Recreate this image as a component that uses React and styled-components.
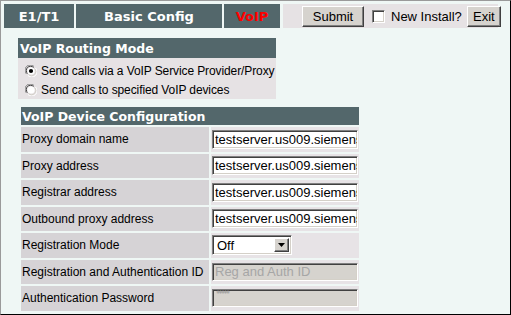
import React from "react";
import styled, { createGlobalStyle } from "styled-components";

const Global = createGlobalStyle`
  html, body { margin: 0; padding: 0; background: #eff7f5; }
  body { font-family: "Liberation Sans", Arial, sans-serif; }
  * { box-sizing: border-box; }
  input::placeholder { color: #a6a6a6; opacity: 1; }
`;

const Frame = styled.div`
  width: 511px;
  height: 315px;
  background: #eff7f5;
  border-top: 1px solid #9a9a9a;
  border-left: 1px solid #9a9a9a;
  border-right: 1px solid #000;
  border-bottom: 1px solid #000;
  padding: 3px 0 0 3px;
  overflow: hidden;
`;

const TopBar = styled.div`
  display: flex;
  height: 24px;
  gap: 2px;
`;

const Tab = styled.div`
  width: ${(p) => p.$w}px;
  flex-shrink: 0;
  background: #53676b;
  color: ${(p) => (p.$active ? "#ff0000" : "#ffffff")};
  font-family: "DejaVu Sans", Verdana, sans-serif;
  font-weight: bold;
  font-size: 13px;
  display: flex;
  align-items: center;
  justify-content: center;
`;

const Toolbar = styled.div`
  margin-left: 1px;
  width: 215px;
  flex-shrink: 0;
  background: #e6e2e4;
  display: flex;
  align-items: center;
  padding-left: 19px;
  white-space: nowrap;
`;

const Button = styled.button`
  flex-shrink: 0;
  height: 21px;
  width: ${(p) => p.$w}px;
  padding: 0;
  background: #d6d3ce;
  font-family: "Liberation Sans", Arial, sans-serif;
  font-size: 13px;
  color: #000;
  border-top: 1px solid #ffffff;
  border-left: 1px solid #ffffff;
  border-right: 1px solid #404040;
  border-bottom: 1px solid #404040;
  box-shadow: inset -1px -1px #808080;
  border-radius: 0;
`;

const CheckBox = styled.span`
  flex-shrink: 0;
  display: inline-block;
  width: 13px;
  height: 13px;
  margin-left: 8px;
  background: #fff;
  border-top: 1px solid #808080;
  border-left: 1px solid #808080;
  border-right: 1px solid #fff;
  border-bottom: 1px solid #fff;
  box-shadow: inset 1px 1px #404040, inset -1px -1px #d4d0c8;
`;

const CheckLabel = styled.span`
  flex-shrink: 0;
  font-size: 13px;
  color: #000;
  margin-left: 6px;
  margin-right: 5px;
`;

const Body = styled.div`
  padding-left: 14px;
  margin-top: 10px;
`;

const Section = styled.div`
  width: ${(p) => p.$w}px;
  margin-left: ${(p) => p.$ml || 0}px;
  margin-top: ${(p) => p.$mt || 0}px;
`;

const Header = styled.div`
  height: ${(p) => p.$h}px;
  background: #53676b;
  color: #fff;
  font-family: "DejaVu Sans", Verdana, sans-serif;
  font-weight: bold;
  font-size: 12.5px;
  display: flex;
  align-items: center;
  padding-left: ${(p) => p.$pl}px;
  white-space: nowrap;
`;

const RadioArea = styled.div`
  background: #e6e2e4;
  padding-top: 3px;
`;

const RadioRow = styled.div`
  height: 19px;
  display: flex;
  align-items: center;
  padding-left: 7px;
  font-size: 12px;
  color: #000;
  white-space: nowrap;
`;

const RadioText = styled.span`
  margin-left: 4px;
  letter-spacing: -0.1px;
`;

const Radio = ({ checked }) => (
  <svg width="12" height="12" viewBox="0 0 12 12" style={{ flexShrink: 0 }}>
    <path d="M1.5 9 A5 5 0 0 1 9 1.5" fill="none" stroke="#808080" strokeWidth="1" />
    <path d="M2.5 8.5 A4 4 0 0 1 8.5 2.5" fill="none" stroke="#404040" strokeWidth="1" />
    <circle cx="6" cy="6" r="3.6" fill="#fff" />
    <path d="M10.5 3 A5 5 0 0 1 3 10.5" fill="none" stroke="#fff" strokeWidth="1" />
    <path d="M9.5 3.5 A4 4 0 0 1 3.5 9.5" fill="none" stroke="#d4d0c8" strokeWidth="1" />
    {checked && <circle cx="6" cy="6" r="2.1" fill="#000" />}
  </svg>
);

const Grid = styled.div`
  display: grid;
  grid-template-columns: 188px 148px;
  grid-auto-rows: 24.5px;
  column-gap: 2px;
  row-gap: 2px;
  margin-top: 2px;
`;

const Label = styled.div`
  background: #d6d3d6;
  font-size: 12px;
  color: #000;
  display: flex;
  align-items: center;
  padding-left: 1px;
  white-space: nowrap;
`;

const Value = styled.div`
  background: #e7e3e6;
  display: flex;
  align-items: center;
  padding-left: 1px;
`;

const inset = `
  border-top: 1px solid #808080;
  border-left: 1px solid #808080;
  border-right: 1px solid #ffffff;
  border-bottom: 1px solid #ffffff;
  box-shadow: inset 1px 1px #404040, inset -1px -1px #d4d0c8;
`;

const TextInput = styled.input`
  width: 146px;
  height: ${(p) => (p.$tall ? 19 : 18)}px;
  ${inset}
  background: ${(p) => (p.disabled ? "#d6d3ce" : "#ffffff")};
  color: #000;
  font-family: "Liberation Sans", Arial, sans-serif;
  font-size: 13px;
  padding: 0 0 0 2px;
  margin: 0;
  outline: none;
  border-radius: 0;
`;

const PasswordBox = styled.div`
  width: 146px;
  height: 18px;
  ${inset}
  background: #d6d3ce;
  color: #9a9a9a;
  font-family: "DejaVu Sans", sans-serif;
  font-size: 8px;
  line-height: 10px;
  padding-left: 3px;
  letter-spacing: -1.5px;
`;

const SelectBox = styled.div`
  width: 80px;
  height: 20px;
  ${inset}
  background: #fff;
  display: flex;
  align-items: stretch;
  padding: 2px;
`;

const SelectValue = styled.span`
  flex: 1;
  font-size: 13px;
  display: flex;
  align-items: center;
  padding-left: 2px;
`;

const ArrowButton = styled.span`
  width: 15px;
  background: #d6d3ce;
  border-top: 1px solid #ffffff;
  border-left: 1px solid #ffffff;
  border-right: 1px solid #404040;
  border-bottom: 1px solid #404040;
  box-shadow: inset -1px -1px #808080;
  display: flex;
  align-items: center;
  justify-content: center;
`;

const rows = [
  { label: "Proxy domain name", kind: "text", value: "testserver.us009.siemens.net" },
  { label: "Proxy address", kind: "text", value: "testserver.us009.siemens.net" },
  { label: "Registrar address", kind: "text", value: "testserver.us009.siemens.net" },
  { label: "Outbound proxy address", kind: "text", value: "testserver.us009.siemens.net" },
  { label: "Registration Mode", kind: "select", value: "Off" },
  { label: "Registration and Authentication ID", kind: "disabled", value: "Reg and Auth ID" },
  { label: "Authentication Password", kind: "password", value: "*****" },
];

function Field({ row }) {
  if (row.kind === "select") {
    return (
      <SelectBox>
        <SelectValue>{row.value}</SelectValue>
        <ArrowButton>
          <svg width="7" height="4" viewBox="0 0 7 4">
            <path d="M0 0 H7 L3.5 4 Z" fill="#000" />
          </svg>
        </ArrowButton>
      </SelectBox>
    );
  }
  if (row.kind === "password") return <PasswordBox>{row.value}</PasswordBox>;
  const disabled = row.kind === "disabled";
  return (
    <TextInput
      $tall={!disabled}
      readOnly
      disabled={disabled}
      value={disabled ? "" : row.value}
      placeholder={disabled ? row.value : undefined}
    />
  );
}

export default function App() {
  return (
    <Frame>
      <Global />
      <TopBar>
        <Tab $w={70}>E1/T1</Tab>
        <Tab $w={146}>Basic Config</Tab>
        <Tab $w={56} $active>VoIP</Tab>
        <Toolbar>
          <Button $w={62}>Submit</Button>
          <CheckBox />
          <CheckLabel>New Install?</CheckLabel>
          <Button $w={34}>Exit</Button>
        </Toolbar>
      </TopBar>
      <Body>
        <Section $w={258}>
          <Header $h={20} $pl={2}>VoIP Routing Mode</Header>
          <RadioArea>
            <RadioRow>
              <Radio checked />
              <RadioText>Send calls via a VoIP Service Provider/Proxy</RadioText>
            </RadioRow>
            <RadioRow>
              <Radio />
              <RadioText>Send calls to specified VoIP devices</RadioText>
            </RadioRow>
          </RadioArea>
        </Section>
        <Section $w={338} $ml={3} $mt={8}>
          <Header $h={18} $pl={1}>VoIP Device Configuration</Header>
          <Grid>
            {rows.map((r) => (
              <React.Fragment key={r.label}>
                <Label>{r.label}</Label>
                <Value>
                  <Field row={r} />
                </Value>
              </React.Fragment>
            ))}
          </Grid>
        </Section>
      </Body>
    </Frame>
  );
}
